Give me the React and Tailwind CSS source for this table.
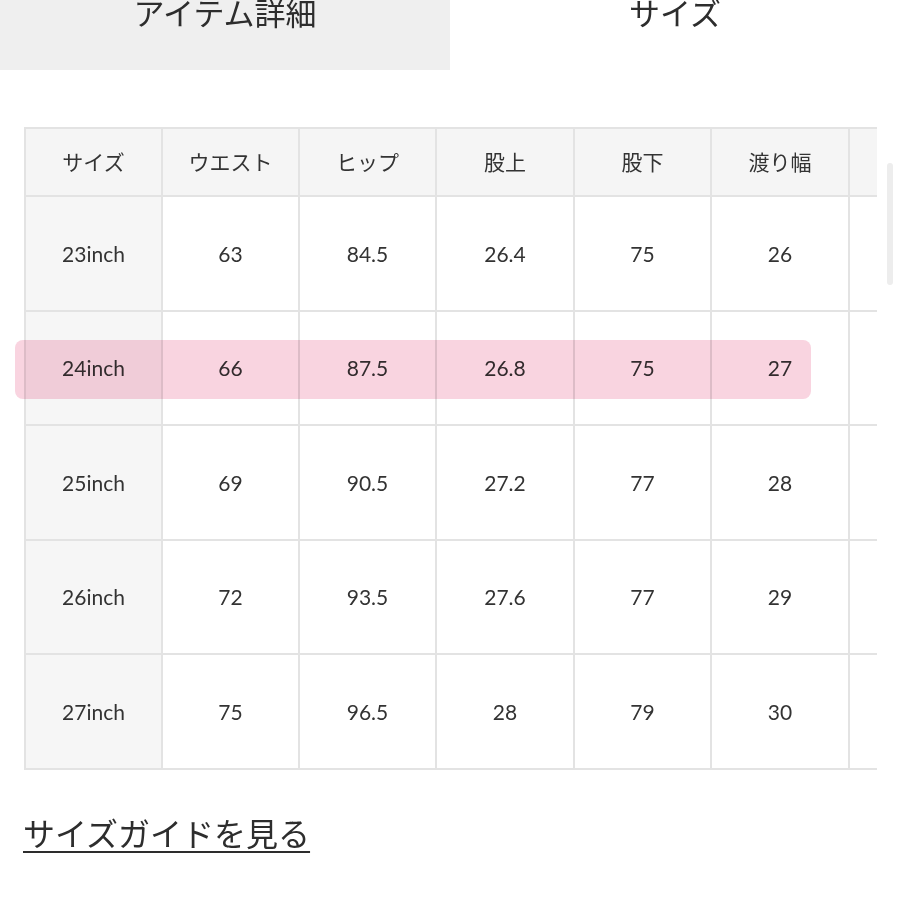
const header = ['サイズ', 'ウエスト', 'ヒップ', '股上', '股下', '渡り幅', '']
const rows = [
  ['23inch', '63', '84.5', '26.4', '75', '26', ''],
  ['24inch', '66', '87.5', '26.8', '75', '27', ''],
  ['25inch', '69', '90.5', '27.2', '77', '28', ''],
  ['26inch', '72', '93.5', '27.6', '77', '29', ''],
  ['27inch', '75', '96.5', '28', '79', '30', ''],
]
const widths = ['w-[137px]', 'w-[137px]', 'w-[137px]', 'w-[138px]', 'w-[137px]', 'w-[138px]', 'w-[137px]']

const font = { fontFamily: '"Lato", "Noto Sans CJK JP", sans-serif' }

export default function App() {
  return (
    <div className="relative w-[900px] h-[900px] bg-white overflow-hidden text-[#333]" style={font}>
      {/* tabs */}
      <div className="flex h-[70px]">
        <div className="w-[450px] bg-[#efefef] flex justify-center">
          <span className="-mt-[5px] text-[31px] leading-[34px] font-['Noto_Sans_CJK_JP'] text-[#2d2d2d]">アイテム詳細</span>
        </div>
        <div className="w-[450px] flex justify-center">
          <span className="-mt-[5px] text-[31px] leading-[34px] font-['Noto_Sans_CJK_JP'] text-[#2d2d2d]">サイズ</span>
        </div>
      </div>

      {/* size table */}
      <div className="ml-[24px] mt-[57px] w-[853px] overflow-hidden">
        <table className="border-collapse table-fixed w-[961px] text-[21px]">
          <thead>
            <tr className="h-[68px] bg-[#f5f5f5]">
              {header.map((h, i) => (
                <th key={i} className={`${widths[i]} border-2 border-[#e3e3e3] font-normal text-center`}>
                  {h}
                </th>
              ))}
            </tr>
          </thead>
          <tbody>
            {rows.map((r, ri) => (
              <tr key={ri} className="h-[114.5px]">
                {r.map((c, i) => (
                  <td
                    key={i}
                    className={`border-2 border-[#e3e3e3] text-center ${i === 0 ? 'bg-[#f6f6f6]' : 'bg-white'}`}
                  >
                    {c}
                  </td>
                ))}
              </tr>
            ))}
          </tbody>
        </table>
      </div>

      {/* highlighter mark on 24inch row */}
      <div className="absolute left-[15px] top-[340px] w-[796px] h-[59px] rounded-[8px] bg-[#f9d4e0] mix-blend-multiply blur-[0.6px]" />

      {/* scrollbar */}
      <div className="absolute left-[887px] top-[163px] w-[6px] h-[122px] rounded-full bg-[#ededed]" />

      <div className="ml-[23px] mt-[42px]">
        <span className="text-[32px] leading-[40px] underline underline-offset-[5px] decoration-2 font-['Noto_Sans_CJK_JP'] text-[#2d2d2d]">
          サイズガイドを見る
        </span>
      </div>
    </div>
  )
}
